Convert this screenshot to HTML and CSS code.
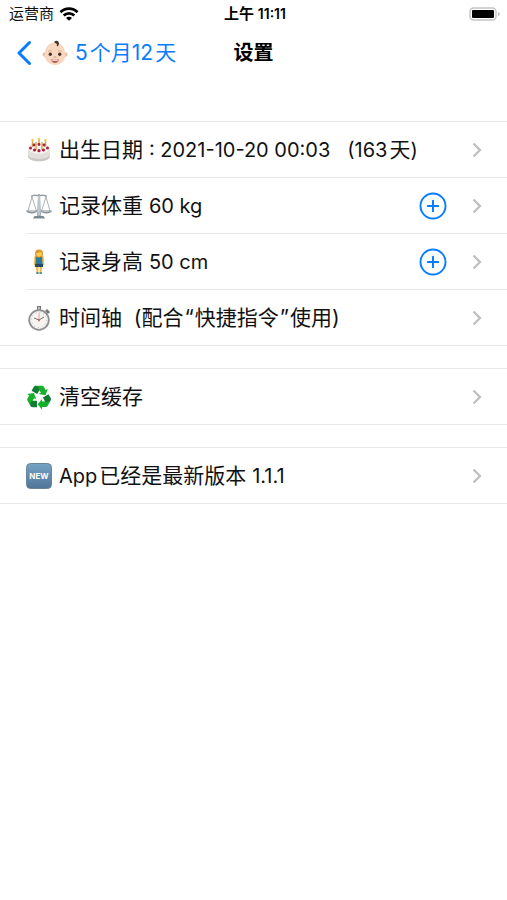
FILE: index.html
```html
<!DOCTYPE html>
<html lang="zh-CN">
<head>
<meta charset="utf-8">
<meta name="viewport" content="width=device-width, initial-scale=1">
<title>设置</title>
<link rel="stylesheet" href="styles.css">
</head>
<body>
<svg class="defs" aria-hidden="true">
  <symbol id="chevron" viewBox="0 0 10 16"><path d="M1.5 1.5 8 8l-6.500 6.500" fill="none" stroke="currentColor" stroke-width="2.200"/></symbol>
  <symbol id="plus" viewBox="0 0 28 28"><circle cx="14" cy="14" r="12.500" fill="none" stroke="currentColor" stroke-width="1.900"/><path d="M14 8.800v10.400M8.800 14h10.400" stroke="currentColor" stroke-width="2" stroke-linecap="round"/></symbol>
</svg>

<div class="status">
  <div class="carrier">
    <span>运营商</span>
    <svg class="wifi" viewBox="0 0 20 14" aria-hidden="true">
      <g fill="none" stroke="#000" stroke-width="2.800"><path d="M1.500 5.200a12 12 0 0 1 17 0"/><path d="M4.700 8.600a7.500 7.500 0 0 1 10.600 0"/></g>
      <path d="M10 13.800 7 10.900a4.200 4.200 0 0 1 6 0z"/>
    </svg>
  </div>
  <time class="clock">上午 <span class="digits">11:11</span></time>
  <svg class="battery" viewBox="0 0 32 14" aria-hidden="true">
    <rect x="1" y="1" width="26" height="12" rx="3.500" fill="#fff" stroke="#c4c4c4" stroke-width="1.500"/>
    <rect x="3" y="3" width="22" height="8" rx="1"/>
    <path d="M29 5q1.800.500 1.800 2T29 9z" fill="#bbb"/>
  </svg>
</div>

<header class="nav">
  <a class="back" href="#">
    <svg class="back-arrow" viewBox="0 0 16 26" aria-hidden="true"><path d="M13.500 2.500 3 13l10.500 10.500" fill="none" stroke="currentColor" stroke-width="3" stroke-linecap="round" stroke-linejoin="round"/></svg>
    <svg class="icon" viewBox="0 0 26 26" aria-hidden="true">
      <circle cx="2.800" cy="14.500" r="2.300" fill="#edbd9c"/><circle cx="23.200" cy="14.500" r="2.300" fill="#edbd9c"/>
      <path d="M13 2.500C7 2.500 3.500 7 3 12.500c-2 6 3 12.500 10 12.500s12-6.500 10-12.500C22.500 7 19 2.500 13 2.500z" fill="#f7d7c0"/>
      <path d="M12.500 1.500c3-2 6 1 3.500 4.500-.500.500-1.500 0-1.200-.800.500-1.200-.500-2.200-2.300-2.200z" fill="#41332e"/>
      <path d="M6.200 11.500q2-1.400 3.800-.400M16 11.100q1.800-1 3.800.400" fill="none" stroke="#d6a888" stroke-width=".9"/>
      <circle cx="8.300" cy="14.200" r="1.700" fill="#49342c"/><circle cx="17.700" cy="14.200" r="1.700" fill="#49342c"/>
      <path d="M12 17h2" stroke="#d69a7c" stroke-linecap="round"/>
      <path d="M9 19.300q4 1 8 0-1 3.700-4 3.700t-4-3.700z" fill="#b35a50"/><path d="M10 19.700q3 .7 6 0l-.5 1h-5z" fill="#fff"/>
    </svg>
    <span class="age">5<span class="unit">个月</span>12<span class="unit">天</span></span>
  </a>
  <h1>设置</h1>
</header>

<main>
  <ul class="group">
    <li class="row">
      <a href="#">
        <svg class="icon" viewBox="0 0 26 26" aria-hidden="true">
          <path d="M2 11v8c0 7 22 7 22 0v-8z" fill="#e2e0dd"/>
          <path d="M2 17v2c0 7 22 7 22 0v-2c0 6.500-22 6.500-22 0z" fill="#cbc7c3"/>
          <ellipse cx="13" cy="11" rx="11" ry="5.800" fill="#f5f3f1"/>
          <g stroke="#d3ab55" stroke-width="1.500"><path d="M6.500 3v7M10 5v8M13 2v6M16 5v8M19.500 3v7"/></g>
          <g fill="#f6cb50"><circle cx="6.500" cy="3" r="1.200"/><circle cx="13" cy="2" r="1.200"/><circle cx="19.500" cy="3" r="1.200"/></g>
          <g fill="#a91f3e"><circle cx="4.500" cy="11" r="1.500"/><circle cx="8" cy="8" r="1.400"/><circle cx="8.500" cy="13" r="1.600"/><circle cx="13" cy="7.500" r="1.400"/><circle cx="13" cy="13.700" r="1.600"/><circle cx="18" cy="8" r="1.400"/><circle cx="17.500" cy="13" r="1.600"/><circle cx="21.500" cy="11" r="1.500"/></g>
        </svg>
        <span class="label">出生日期 <span class="latin">: 2021-10-20 00:03 &nbsp; (163</span><span class="unit">天</span><span class="latin">)</span></span>
      </a>
      <svg class="chevron" aria-hidden="true"><use href="#chevron"/></svg>
    </li>
    <li class="row">
      <a href="#">
        <svg class="icon" viewBox="0 0 26 26" aria-hidden="true">
          <g fill="none" stroke="#96a0a6"><path d="M6 4 2 18M6 4l4.500 14M20 4l-4.500 14M20 4l4 14" stroke-width=".8"/><path d="M5 3.500q4-2 8-.500 4-1.500 8 .500" stroke-width="1.500"/></g>
          <path d="M12 1h2l1 22h-4z" fill="#a2abb0"/><path d="M12.500 3h1v19h-1z" fill="#dce1e4"/>
          <path d="M0 17.500h11.500c-.500 4-11 4-11.500 0zM14.500 17.500H26c-.500 4-11 4-11.500 0z" fill="#899499"/><path d="M1.500 18h9q-4.500 1.500-9 0M15.500 18h9q-4.500 1.500-9 0" fill="#d5dadd"/>
          <path d="M8.500 23h9l1.500 2.500H7z" fill="#7d888e"/>
        </svg>
        <span class="label">记录体重 <span class="latin">60 kg</span></span>
      </a>
      <button class="add" type="button" aria-label="添加体重"><svg aria-hidden="true"><use href="#plus"/></svg></button>
      <svg class="chevron" aria-hidden="true"><use href="#chevron"/></svg>
    </li>
    <li class="row">
      <a href="#">
        <svg class="icon" viewBox="0 0 26 26" aria-hidden="true">
          <path d="M9.500 16h3l-.200 8h-1.600zM13.500 16h3l-1.200 8h-1.600z" fill="#f4bc45"/>
          <path d="M8.500 7h9l.800 9h-1.800l-.500-5h-6l-.500 5H7.700z" fill="#f6bd40"/>
          <path d="M9.800 7.500h6.400l.2 5.500.8 5H8.800l.8-5z" fill="#2e7898"/><path d="M9.200 15h7.600l.4 3H8.800z" fill="#244960"/>
          <circle cx="13" cy="4.500" r="4" fill="#df962d"/><path d="M10.300 4q3 0 4-1.500 1 1.500 1.500 1.500c0 5-5.500 5-5.500 0z" fill="#ffcd52"/>
          <path d="M10.300 23h2.300v2h-2.300zM13.500 23h2.300v2h-2.300z" fill="#549084"/>
        </svg>
        <span class="label">记录身高 <span class="latin">50 cm</span></span>
      </a>
      <button class="add" type="button" aria-label="添加身高"><svg aria-hidden="true"><use href="#plus"/></svg></button>
      <svg class="chevron" aria-hidden="true"><use href="#chevron"/></svg>
    </li>
    <li class="row">
      <a href="#">
        <svg class="icon" viewBox="0 0 26 26" aria-hidden="true">
          <path d="M11 1h4v4h-4zM21 4l3 3-2 2-3-3z" fill="#777"/><path d="M12 2h2v4h-2z" fill="#bbb"/>
          <circle cx="13" cy="15" r="9.800" fill="#f5f4f2" stroke="#909090" stroke-width="1.800"/>
          <circle cx="13" cy="15" r="7.500" fill="none" stroke="#bcbcbc" stroke-dasharray="1 2.930"/>
          <path d="m8 13 5 2 5-3" fill="none" stroke="#707070" stroke-width="1"/><path d="M13 8v9" stroke="#e29383" stroke-width=".8"/><circle cx="13" cy="15" r="1" fill="#b96555"/>
        </svg>
        <span class="label">时间轴 &nbsp;(配合<span class="quote">“</span>快捷指令<span class="quote">”</span>使用)</span>
      </a>
      <svg class="chevron" aria-hidden="true"><use href="#chevron"/></svg>
    </li>
  </ul>

  <ul class="group">
    <li class="row">
      <a href="#">
        <svg class="icon" viewBox="-14 -14.500 28 28" aria-hidden="true">
          <defs>
            <g id="recycle-arm">
              <path d="M-4-12.500h7q1.700 0 2.500 1.500l1.700 3L9.500-9.200 7-2.300-.300-3.600 2-5-1.500-11z" fill="#14b229"/>
              <path d="M-4-12.500q2.500 0 3.600 2L.8-8.300-2-3.700l-6-3.400 2-3.600q1-1.800 2-1.800z" fill="#107c31"/>
            </g>
          </defs>
          <use href="#recycle-arm"/><use href="#recycle-arm" transform="rotate(120)"/><use href="#recycle-arm" transform="rotate(240)"/>
        </svg>
        <span class="label">清空缓存</span>
      </a>
      <svg class="chevron" aria-hidden="true"><use href="#chevron"/></svg>
    </li>
  </ul>

  <ul class="group">
    <li class="row">
      <a href="#">
        <svg class="icon" viewBox="0 0 26 26" aria-hidden="true">
          <defs><linearGradient id="badge" x2="0" y2="1"><stop stop-color="#76a3c4"/><stop offset="1" stop-color="#4f7599"/></linearGradient></defs>
          <rect x=".5" y=".5" width="25" height="25" rx="4" fill="url(#badge)" stroke="#6c8396"/>
          <text class="badge-text" x="13" y="16" text-anchor="middle">NEW</text>
        </svg>
        <span class="label"><span class="latin">App</span><span class="unit">已经是最新版本</span> <span class="latin">1.1.1</span></span>
      </a>
      <svg class="chevron" aria-hidden="true"><use href="#chevron"/></svg>
    </li>
  </ul>
</main>
</body>
</html>
```
FILE: styles.css
```css
* { box-sizing: border-box; }

body {
  margin: 0;
  background: #fff;
  color: #111;
  font-family: Inter, "Noto Sans CJK SC", sans-serif;
  font-size: 21px;
  line-height: 28px;
}

a { color: inherit; text-decoration: none; }
svg { display: block; flex: none; }
.defs { width: 0; height: 0; position: absolute; }
.latin { font-size: 20px; }
.unit { margin-left: 2px; }

.status {
  display: grid;
  grid-template-columns: 1fr auto 1fr;
  align-items: center;
  height: 28px;
  padding: 0 6px 0 9px;
  font-size: 15px;
}
.carrier { display: flex; align-items: center; gap: 5px; }
.wifi { width: 20px; height: 14px; }
.clock { font-weight: 600; color: #000; }
.digits { font-size: 14px; }
.battery { width: 32px; height: 14px; justify-self: end; }

.nav {
  display: grid;
  grid-template-columns: 1fr auto 1fr;
  align-items: center;
  height: 50px;
  padding: 0 16px;
}
.back { display: flex; align-items: center; color: #087cff; white-space: nowrap; }
.back-arrow { width: 16px; height: 26px; margin-right: 10px; }
.age { margin-left: 7px; }
h1 { margin: 0; font-size: 20px; font-weight: 700; color: #000; }

main { padding-top: 43px; }
.group {
  margin: 0 0 22px;
  padding: 0;
  list-style: none;
  border-top: 1px solid #e8e8e8;
  border-bottom: 1px solid #e8e8e8;
}
.row {
  display: flex;
  align-items: center;
  min-height: 56px;
  margin-left: 26px;
  padding-right: 25px;
}
.row:first-child { min-height: 55px; }
.row + .row { border-top: 1px solid #e8e8e8; }
.row a { display: flex; align-items: center; flex: 1; gap: 7px; }
.icon { width: 26px; height: 26px; }
.label { white-space: nowrap; }
.quote { margin: 0 1px; }
.badge-text { font: 700 8px Inter, sans-serif; fill: #fff; }

.add {
  margin: 0 25px 0 0;
  padding: 0;
  border: 0;
  background: none;
  color: #087cff;
}
.add svg { width: 28px; height: 28px; }
.chevron { width: 10px; height: 16px; color: #bebebe; }
```
